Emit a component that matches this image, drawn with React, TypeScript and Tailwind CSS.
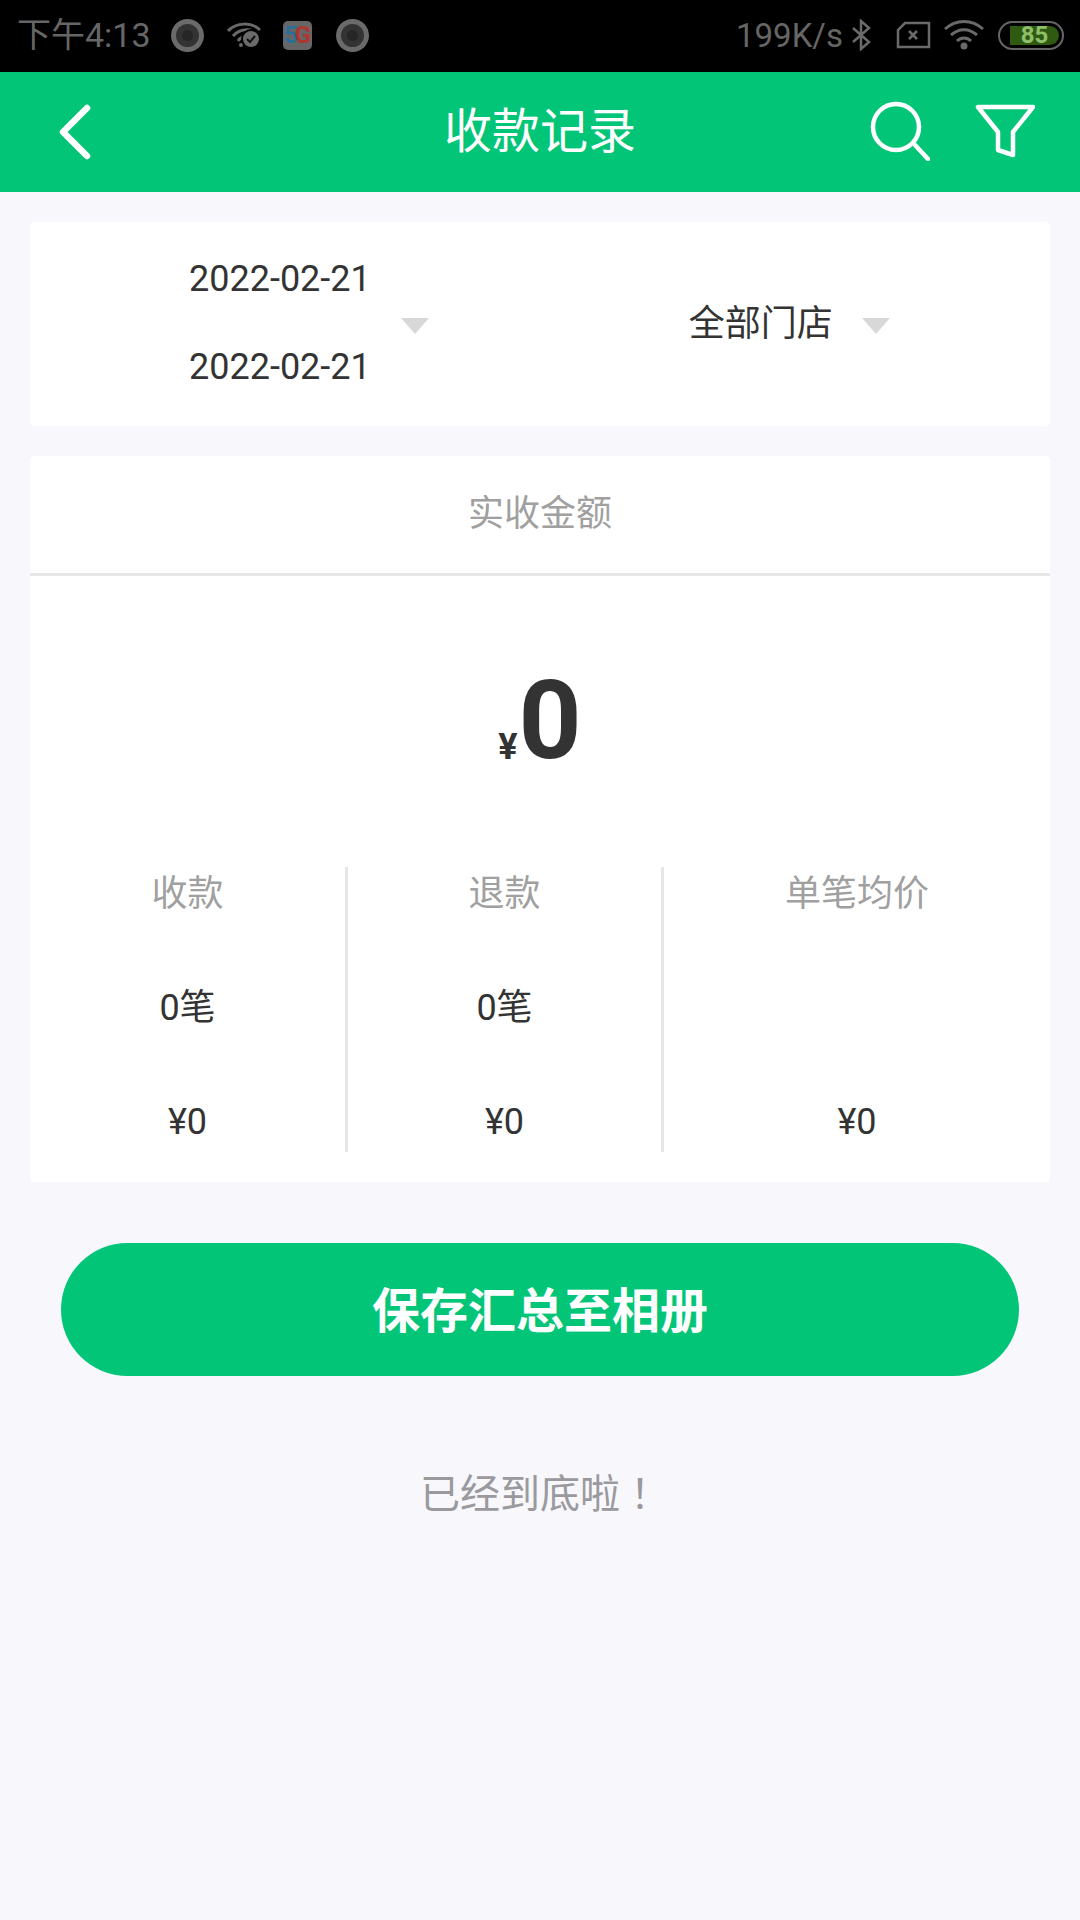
const font = "font-['Roboto','Noto_Sans_CJK_SC',sans-serif]";

function Tri() {
  return <span className="block w-0 h-0 mt-[3px] border-l-[14px] border-r-[14px] border-t-[16px] border-l-transparent border-r-transparent border-t-[#d8d8d8]" />;
}

function Ring() {
  return (
    <span className="flex w-[33px] h-[33px] rounded-full bg-[#6a6a6a] items-center justify-center">
      <span className="flex w-[23px] h-[23px] rounded-full bg-[#333] items-center justify-center">
        <span className="w-[11px] h-[11px] rounded-full bg-[#262626]" />
      </span>
    </span>
  );
}

function Stat({ title, a, b, cls }: { title: string; a: string; b: string; cls: string }) {
  return (
    <div className={`${cls} h-[285px] flex flex-col items-center justify-between text-[36px] leading-[44px] pt-[5px] pb-[8px]`}>
      <div className="text-[#a0a0a0]">{title}</div>
      <div className="text-[#333]">{a}</div>
      <div className="text-[#333]">{b}</div>
    </div>
  );
}

export default function App() {
  return (
    <div className={`${font} w-[1080px] h-[1920px] bg-[#f7f7fc] flex flex-col`}>
      <div className="h-[72px] bg-black flex items-center text-[#666] pl-[17px] pr-[16px] pb-[2px]">
        <span className="text-[34px] leading-none">下午4:13</span>
        <span className="ml-[20px]"><Ring /></span>
        <svg className="ml-[23px]" width="34" height="26" viewBox="0 0 34 26" fill="none" stroke="#6a6a6a" strokeWidth="3">
          <path d="M1 9C9 0 25 0 33 8" />
          <path d="M6 14C11 8 18 7 24 8" />
          <path d="M11 19C13 16 15 15 17 15" />
          <circle cx="14" cy="23" r="2" fill="#6a6a6a" stroke="none" />
          <circle cx="24" cy="17" r="9" fill="#6a6a6a" stroke="#000" strokeWidth="2" />
          <path d="M20 17l3 3 5-6" stroke="#111" strokeWidth="2" />
        </svg>
        <span className="ml-[22px] w-[29px] h-[29px] rounded-[5px] bg-[#666] flex items-center justify-center text-[24px] font-bold leading-none tracking-[-3px] pr-[2px]">
          <span className="text-[#2a6f9c]">5</span><span className="text-[#b0342f]">G</span>
        </span>
        <span className="ml-[24px]"><Ring /></span>
        <span className="ml-auto text-[33px] leading-none">199K/s</span>
        <svg className="ml-[8px]" width="20" height="32" viewBox="0 0 20 32" fill="none" stroke="#6a6a6a" strokeWidth="2.5">
          <path d="M2 9l16 14-8 7V2l8 7L2 23" />
        </svg>
        <svg className="ml-[24px]" width="36" height="28" viewBox="0 0 36 28" fill="none" stroke="#6a6a6a" strokeWidth="2.5">
          <path d="M10 2h24v24H3V9z" />
          <path d="M14 10l8 8M22 10l-8 8" />
        </svg>
        <svg className="ml-[13px]" width="40" height="32" viewBox="0 0 40 32" fill="none" stroke="#6a6a6a" strokeWidth="3">
          <path d="M1 10C12 0 28 0 39 10" />
          <path d="M7 16C15 9 25 9 33 16" />
          <path d="M13 22C17 18 23 18 27 22" />
          <circle cx="20" cy="27" r="3.5" fill="#6a6a6a" stroke="none" />
        </svg>
        <span className="ml-[14px] w-[66px] h-[29px] rounded-full border-[2px] border-[#666] p-[3px] flex">
          <span className="w-full h-full rounded-l-[3px] rounded-r-full bg-[#2e5a12] ml-[7px] flex items-center justify-center text-[#8fbf6a] text-[24px] font-bold leading-none">85</span>
        </span>
      </div>

      <div className="h-[120px] bg-[#03c577] flex items-center text-white">
        <svg className="ml-[58px]" width="34" height="56" viewBox="0 0 34 56" fill="none" stroke="white" strokeWidth="6.5" strokeLinecap="round" strokeLinejoin="round">
          <path d="M29 4L5 28l24 24" />
        </svg>
        <div className="flex-1 text-center text-[48px] leading-none pl-[118px]">收款记录</div>
        <svg className="mr-[45px] -mt-[2px]" width="60" height="60" viewBox="0 0 60 60" fill="none" stroke="white" strokeWidth="4.5" strokeLinecap="round">
          <circle cx="26" cy="26" r="23" />
          <path d="M45 44l13 14" />
        </svg>
        <svg className="mr-[45px] -mt-[2px]" width="60" height="56" viewBox="0 0 60 56" fill="none" stroke="white" strokeWidth="4.5" strokeLinejoin="round">
          <path d="M3 4h55L38 29v23l-15-5V29z" />
        </svg>
      </div>

      <div className="mt-[30px] mx-[30px] h-[204px] bg-white rounded-[4px] flex items-center text-[#333] text-[36px]">
        <div className="ml-[159px] mb-[3px] flex flex-col gap-[44px] leading-[44px]">
          <span>2022-02-21</span>
          <span>2022-02-21</span>
        </div>
        <span className="ml-[30px]"><Tri /></span>
        <span className="ml-[260px] leading-[44px]">全部门店</span>
        <span className="ml-[29px]"><Tri /></span>
      </div>

      <div className="mt-[30px] mx-[30px] h-[726px] bg-white rounded-[4px] flex flex-col">
        <div className="h-[120px] pb-[2px] flex items-center justify-center text-[#a0a0a0] text-[36px] border-b-[3px] border-[#e6e6e6]">实收金额</div>
        <div className="h-[291px] flex items-end justify-center text-[#333] pb-[98px]">
          <span className="text-[36px] font-bold leading-none mb-[4px] mr-[1px]">¥</span>
          <span className="text-[110px] font-bold leading-[104px] -mb-[4px]">0</span>
        </div>
        <div className="flex">
          <Stat title="收款" a="0笔" b="¥0" cls="w-[318px] border-r-[3px] border-[#e6e6e6]" />
          <Stat title="退款" a="0笔" b="¥0" cls="w-[316px] border-r-[3px] border-[#e6e6e6]" />
          <Stat title="单笔均价" a=" " b="¥0" cls="flex-1" />
        </div>
      </div>

      <div className="mt-[61px] mx-[61px] h-[133px] pt-[4px] rounded-full bg-[#03c577] flex items-center justify-center text-white text-[48px] font-bold">保存汇总至相册</div>
      <div className="mt-[87px] text-center text-[40px] leading-[56px] text-[#9a9a9e]">已经到底啦<span className="font-['Noto_Sans_CJK_TC',sans-serif]">！</span></div>
    </div>
  );
}
